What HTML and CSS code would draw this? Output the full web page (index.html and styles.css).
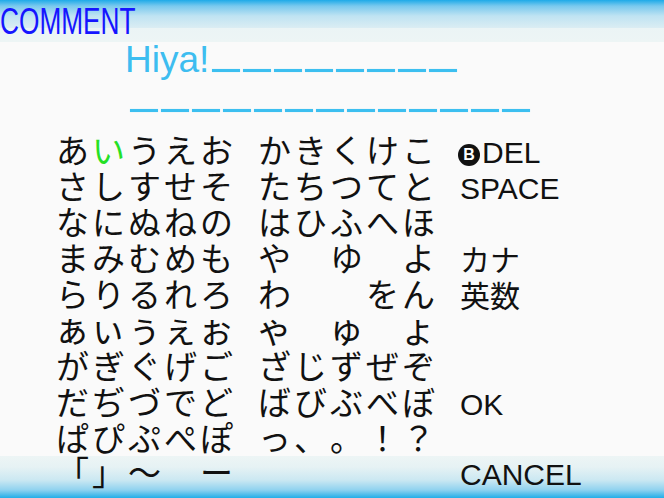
FILE: index.html
```html
<!DOCTYPE html>
<html lang="ja">
<head>
<meta charset="utf-8">
<title>COMMENT</title>
<link rel="stylesheet" href="styles.css">
</head>
<body>
<div class="screen">
  <header class="top"><span class="title">COMMENT</span></header>
  <div class="comment">
    <div class="cline first"><span class="typed">Hiya!</span><span class="dashes"><i></i><i></i><i></i><i></i><i></i><i></i><i></i><i></i></span></div>
    <div class="cline second"><span class="dashes"><i></i><i></i><i></i><i></i><i></i><i></i><i></i><i></i><i></i><i></i><i></i><i></i><i></i></span></div>
  </div>
  <div class="kbd">
    <div class="row"><div class="grp"><span>あ</span><span class="sel">い</span><span>う</span><span>え</span><span>お</span></div><div class="grp"><span>か</span><span>き</span><span>く</span><span>け</span><span>こ</span></div><div class="lbl"><span class="bbtn">B</span>DEL</div></div>
    <div class="row"><div class="grp"><span>さ</span><span>し</span><span>す</span><span>せ</span><span>そ</span></div><div class="grp"><span>た</span><span>ち</span><span>つ</span><span>て</span><span>と</span></div><div class="lbl">SPACE</div></div>
    <div class="row"><div class="grp"><span>な</span><span>に</span><span>ぬ</span><span>ね</span><span>の</span></div><div class="grp"><span>は</span><span>ひ</span><span>ふ</span><span>へ</span><span>ほ</span></div><div class="lbl"></div></div>
    <div class="row"><div class="grp"><span>ま</span><span>み</span><span>む</span><span>め</span><span>も</span></div><div class="grp"><span>や</span><span></span><span>ゆ</span><span></span><span>よ</span></div><div class="lbl jp">カナ</div></div>
    <div class="row"><div class="grp"><span>ら</span><span>り</span><span>る</span><span>れ</span><span>ろ</span></div><div class="grp"><span>わ</span><span></span><span></span><span>を</span><span>ん</span></div><div class="lbl jp">英数</div></div>
    <div class="row"><div class="grp small"><span>ぁ</span><span>ぃ</span><span>ぅ</span><span>ぇ</span><span>ぉ</span></div><div class="grp small"><span>ゃ</span><span></span><span>ゅ</span><span></span><span>ょ</span></div><div class="lbl"></div></div>
    <div class="row"><div class="grp"><span>が</span><span>ぎ</span><span>ぐ</span><span>げ</span><span>ご</span></div><div class="grp"><span>ざ</span><span>じ</span><span>ず</span><span>ぜ</span><span>ぞ</span></div><div class="lbl"></div></div>
    <div class="row"><div class="grp"><span>だ</span><span>ぢ</span><span>づ</span><span>で</span><span>ど</span></div><div class="grp"><span>ば</span><span>び</span><span>ぶ</span><span>べ</span><span>ぼ</span></div><div class="lbl">OK</div></div>
    <div class="row"><div class="grp"><span>ぱ</span><span>ぴ</span><span>ぷ</span><span>ぺ</span><span>ぽ</span></div><div class="grp"><span>っ</span><span>、</span><span>。</span><span>！</span><span>？</span></div><div class="lbl"></div></div>
  </div>
  <footer class="bottom">
    <div class="row"><div class="grp"><span>「</span><span>」</span><span>～</span><span></span><span>ー</span></div><div class="grp"><span></span><span></span><span></span><span></span><span></span></div><div class="lbl">CANCEL</div></div>
  </footer>
</div>
</body>
</html>
```

FILE: styles.css
```css
html, body {
  margin: 0;
  padding: 0;
  background: #fafafa;
}
.screen {
  width: 664px;
  height: 498px;
  overflow: hidden;
  position: relative;
  background: #fafafa;
  font-family: "Liberation Sans", Arial, sans-serif;
}
.top {
  height: 42px;
  background: linear-gradient(to bottom, #1eaae8 0px, #79c9ee 6px, #bfe3f2 16px, #dbedf3 28px, #ebf4f5 28px, #edf5f5 42px);
}
.title {
  display: block;
  width: 210px;
  height: 42px;
  font-size: 37.5px;
  line-height: 42px;
  color: #1515ff;
  transform: scaleX(0.7);
  transform-origin: 0 0;
  white-space: nowrap;
}
.comment {
  display: flex;
  flex-direction: column;
  gap: 4px;
}
.cline {
  height: 36px;
  line-height: 36px;
  font-size: 37px;
  color: #3dbdf0;
  white-space: nowrap;
}
.cline.first { padding-left: 125px; }
.cline.second { padding-left: 130px; }
.dashes i {
  display: inline-block;
  width: 28px;
  height: 3px;
  margin-right: 3px;
  background: #3cbff0;
  box-shadow: 0 0 1px #8fd9f6;
}
.cline.first .dashes { margin-left: 3px; }
.kbd {
  margin-top: 13px;
}
.row {
  display: flex;
  align-items: baseline;
  gap: 22px;
  height: 36px;
  padding-left: 56px;
}
.grp {
  display: grid;
  grid-template-columns: repeat(5, 36px);
  font-family: "Noto Sans CJK JP", "Noto Sans CJK SC", sans-serif;
  font-size: 33px;
  line-height: 36px;
  color: #111;
}
.grp span {
  display: block;
  white-space: nowrap;
}
.grp.small {
  font-size: 36px;
  line-height: 33px;
}
.grp.small span {
  margin-left: -2px;
}
.sel {
  color: #25e025;
}
.lbl {
  font-size: 30px;
  line-height: 36px;
  color: #111;
  white-space: nowrap;
  display: flex;
  align-items: baseline;
}
.lbl.jp {
  font-family: "Noto Sans CJK JP", "Noto Sans CJK SC", sans-serif;
}
.bbtn {
  display: inline-block;
  width: 22px;
  height: 22px;
  border-radius: 50%;
  background: #111;
  color: #fff;
  font-weight: bold;
  font-size: 16px;
  line-height: 22px;
  text-align: center;
  margin-right: 2px;
  margin-left: -2px;
  align-self: center;
  position: relative;
  top: 2px;
}
.bottom {
  position: absolute;
  left: 0;
  right: 0;
  bottom: 0;
  height: 42px;
  background: linear-gradient(to bottom, #edf5f5 0px, #e6f2f4 11px, #cbe8f2 24px, #8fd2ef 34px, #22aee8 42px);
}
.bottom .row {
  margin-top: -3px;
}
```
